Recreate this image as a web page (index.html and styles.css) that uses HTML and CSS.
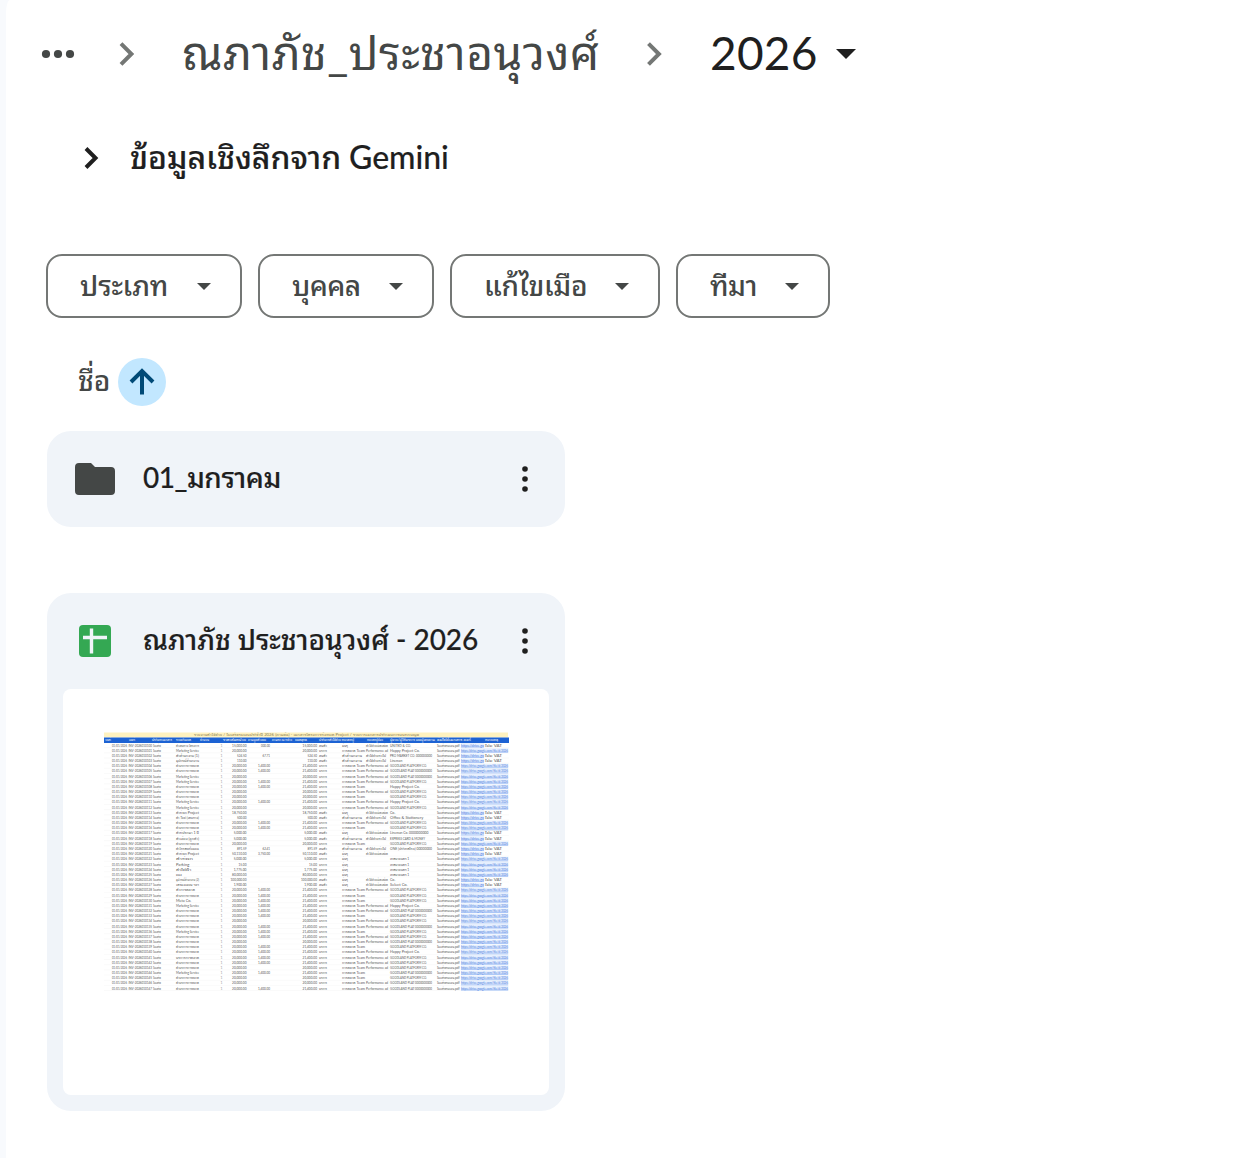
FILE: index.html
```html
<!DOCTYPE html>
<html lang="th">
<head>
    <meta charset="UTF-8">
    <meta name="viewport" content="width=device-width, initial-scale=1.0">
    <title>2026</title>
    <link rel="stylesheet" href="styles.css">
</head>
<body>
    <main class="panel">
        <nav class="breadcrumb">
            <svg class="more" width="34" height="10" viewBox="0 0 34 10"><circle cx="5" cy="5" r="4.1"/><circle cx="17" cy="5" r="4.1"/><circle cx="29" cy="5" r="4.1"/></svg>
            <svg class="chevron" width="16" height="24" viewBox="0 0 16 24"><path d="M2 1.6 12.4 12 2 22.4"/></svg>
            <span class="crumb">ณภาภัช_ประชาอนุวงศ์</span>
            <svg class="chevron" width="16" height="24" viewBox="0 0 16 24"><path d="M2.5 1.6 12.9 12 2.5 22.4"/></svg>
            <span class="crumb current">2026</span>
            <svg class="caret-big" width="20" height="10" viewBox="0 0 20 10"><path d="M0 0h20L10 10z"/></svg>
        </nav>

        <div class="insight">
            <svg class="chevron dark" width="16" height="24" viewBox="0 0 16 24"><path d="M3 2.5 12.5 12 3 21.5"/></svg>
            <span class="insight-title">ข้อมูลเชิงลึกจาก Gemini</span>
        </div>

        <div class="filters">
            <button class="chip chip-type"><span>ประเภท</span><svg width="14" height="7" viewBox="0 0 14 7"><path d="M0 0h14L7 7z"/></svg></button>
            <button class="chip chip-people"><span>บุคคล</span><svg width="14" height="7" viewBox="0 0 14 7"><path d="M0 0h14L7 7z"/></svg></button>
            <button class="chip chip-modified"><span>แก้ไขเมื่อ</span><svg width="14" height="7" viewBox="0 0 14 7"><path d="M0 0h14L7 7z"/></svg></button>
            <button class="chip chip-source"><span>ที่มา</span><svg width="14" height="7" viewBox="0 0 14 7"><path d="M0 0h14L7 7z"/></svg></button>
        </div>

        <div class="sort">
            <span class="sort-label">ชื่อ</span>
            <span class="sort-arrow"><svg width="26" height="28" viewBox="0 0 26 28"><path d="M13 26.5V3M2 14 13 3l11 11"/></svg></span>
        </div>

        <div class="card folder">
            <div class="card-head">
                <span class="icon"><svg width="40" height="32" viewBox="0 0 40 32"><path fill="#444746" d="M4 0h12l4 4h16a4 4 0 0 1 4 4v20a4 4 0 0 1-4 4H4a4 4 0 0 1-4-4V4a4 4 0 0 1 4-4z"/></svg></span>
                <span class="name">01_มกราคม</span>
                <svg class="dots" width="8" height="28" viewBox="0 0 8 28"><circle cx="4" cy="4" r="2.8"/><circle cx="4" cy="14" r="2.8"/><circle cx="4" cy="24" r="2.8"/></svg>
            </div>
        </div>

        <div class="card file">
            <div class="card-head">
                <span class="icon"><svg width="32" height="32" viewBox="0 0 32 32"><rect width="32" height="32" rx="4" fill="#34a853"/><path d="M4 12.5h24M12.5 3.5v25" stroke="#f0f4f9" stroke-width="3.4"/></svg></span>
                <span class="name">ณภาภัช ประชาอนุวงศ์ - 2026</span>
                <svg class="dots" width="8" height="28" viewBox="0 0 8 28"><circle cx="4" cy="4" r="2.8"/><circle cx="4" cy="14" r="2.8"/><circle cx="4" cy="24" r="2.8"/></svg>
            </div>
            <svg class="preview" id="preview" width="486" height="406" viewBox="0 0 486 406"></svg>
        </div>
    </main>
    <script src="preview.js"></script>
</body>
</html>
```
FILE: styles.css
```css
body {
    margin: 0;
    background-color: #f8fafd;
    font-family: Lato, "Noto Sans Thai Looped", "Noto Sans Thai", "Noto Sans", sans-serif;
    color: #1f1f1f;
}
.panel {
    box-sizing: border-box;
    height: 1158px;
    margin-left: 6px;
    padding-left: 40px;
    background-color: #fff;
    border-top-left-radius: 4px 14px;
    overflow: hidden;
}
.breadcrumb {
    display: flex;
    align-items: center;
    height: 108px;
    margin-left: -5px;
    white-space: nowrap;
}
.more {
    fill: #444746;
    margin-right: 44px;
}
.chevron {
    fill: none;
    stroke: #747775;
    stroke-width: 4;
}
.chevron.dark {
    stroke: #1f1f1f;
}
.crumb {
    width: 416px;
    margin: 0 48px 0 47px;
    padding-bottom: 2px;
    font-size: 46px;
    line-height: 72px;
    letter-spacing: 0.5px;
    color: #444746;
}
.crumb.current {
    width: 108px;
    margin: 0 18px 0 48px;
    letter-spacing: 0.2px;
    color: #1f1f1f;
}
.caret-big {
    fill: #1f1f1f;
}
.insight {
    display: flex;
    align-items: center;
    height: 100px;
    padding-left: 37px;
    gap: 31px;
}
.insight-title {
    padding-bottom: 7px;
    font-size: 32px;
    font-weight: 500;
    letter-spacing: -0.07px;
    -webkit-text-stroke: 0.15px #1f1f1f;
    white-space: nowrap;
}
.filters {
    display: flex;
    gap: 16px;
    margin-top: 46px;
}
.chip {
    box-sizing: border-box;
    display: flex;
    align-items: center;
    justify-content: space-between;
    height: 64px;
    padding: 0 29px 0 32px;
    border: 2px solid #747775;
    border-radius: 16px;
    background: none;
    color: #444746;
    font-family: inherit;
    font-size: 28px;
    font-weight: 500;
    white-space: nowrap;
}
.chip span {
    height: 36px;
    line-height: 34px;
}
.chip svg {
    fill: #444746;
}
.chip-type {
    width: 196px;
    letter-spacing: -0.1px;
}
.chip-people {
    width: 176px;
    letter-spacing: -0.6px;
}
.chip-modified {
    width: 210px;
    letter-spacing: -0.3px;
}
/* the top tone mark is cut off by the chip label */
.chip-modified span {
    clip-path: polygon(0 -2px, 60% -2px, 60% 5px, 100% 5px, 100% 100%, 0 100%);
}
.chip-source {
    width: 154px;
    letter-spacing: -0.5px;
}
.chip-source span {
    clip-path: inset(5px 0 0 0);
}
.sort {
    display: flex;
    align-items: center;
    height: 48px;
    margin: 40px 0 25px 32px;
}
.sort-label {
    width: 40px;
    padding-bottom: 7px;
    font-size: 28px;
    font-weight: 500;
    color: #444746;
}
.sort-arrow {
    display: flex;
    align-items: center;
    justify-content: center;
    width: 48px;
    height: 48px;
    border-radius: 50%;
    background-color: #c2e7ff;
}
.sort-arrow svg {
    fill: none;
    stroke: #004a77;
    stroke-width: 4;
}
.card {
    box-sizing: border-box;
    width: 518px;
    margin-left: 1px;
    padding: 0 16px;
    border-radius: 24px;
    background-color: #f0f4f9;
}
.card-head {
    display: flex;
    align-items: center;
    height: 96px;
}
.icon {
    display: flex;
    justify-content: center;
    width: 64px;
    margin-right: 16px;
}
.name {
    flex: 1;
    padding-bottom: 7px;
    font-size: 28px;
    font-weight: 500;
    letter-spacing: -0.06px;
    -webkit-text-stroke: 0.15px #1f1f1f;
    white-space: nowrap;
}
.folder .name {
    letter-spacing: -0.5px;
}
.dots {
    fill: #1f1f1f;
    margin-right: 20px;
}
.file {
    height: 518px;
    margin-top: 66px;
}
.preview {
    display: block;
    border-radius: 8px;
    background-color: #fff;
    font-size: 3.3px;
}
```
FILE: preview.js
```js
const preview = document.getElementById('preview');
const NS = 'http://www.w3.org/2000/svg';

function add(tag, attrs, text) {
    const el = document.createElementNS(NS, tag);
    for (const key in attrs) el.setAttribute(key, attrs[key]);
    if (text) el.textContent = text;
    preview.appendChild(el);
}

function cell(x, y, width, text, color) {
    add('text', { x: x, y: y, textLength: width, lengthAdjust: 'spacingAndGlyphs', fill: color || '#555' }, text);
}

const service = 'ค่าบริการการตลาด';
const marketing = 'Marketing Service';
const goods = 'GOODLAND PLATFORM CO.';
// item, amount, vat, kind (o = other, f = office, t = team), supplier
const rows = [
    ['ค่าเดินทาง โครงการ', '15,000.00', '000.00', 'o', 'UNITED & CO.'],
    [marketing, '20,000.00', '', 't', 'Happy Project Co.'],
    ['ค่าสำนักงาน (1)', '524.50', '67.71', 'f', 'PRO MARKET CO. 000000000'],
    ['อุปกรณ์สำนักงาน', '110.00', '', 'f', 'Lineman'],
    [service, '20,000.00', '1,400.00', 't', goods],
    [service, '20,000.00', '1,400.00', 't', 'GOODLAND PLAT 0000000000'],
    [marketing, '20,000.00', '', 't', 'GOODLAND PLAT 0000000000'],
    [marketing, '20,000.00', '1,400.00', 't', goods],
    [service, '20,000.00', '1,400.00', 'u', 'Happy Project Co.'],
    [service, '20,000.00', '', 't', goods],
    [service, '20,000.00', '', 'u', goods],
    [marketing, '20,000.00', '1,400.00', 't', 'Happy Project Co.'],
    [marketing, '20,000.00', '', 't', goods],
    ['ค่าที่พัก Project', '18,750.00', '', 'o', 'Co.'],
    ['ค่า Taxi (เดินทาง)', '500.00', '', 'f', 'Office & Stationery'],
    [service, '20,000.00', '1,400.00', 't', goods],
    [service, '20,000.00', '1,400.00', 'u', goods],
    ['ค่าที่ปรึกษา 1 ปี', '5,000.00', '', 'o', 'Lineman Co. 0000000000'],
    ['ค่าเลี้ยง (ลูกค้า)', '5,000.00', '', 'f', 'EXPRESS CARD & MONEY'],
    [service, '20,000.00', '', 'u', goods],
    ['ค่าโทรศัพท์มือถือ', '891.59', '62.41', 'f', 'ONE (ประเทศไทย) 00000000'],
    ['ค่าที่พัก Project', '50,110.00', '3,750.00', 'o', ''],
    ['ค่าที่พัก', '5,000.00', '', 'o', 'เทศบาลนคร 1'],
    ['Parking', '15.00', '', 'o', 'เทศบาลนคร 1'],
    ['ค่าไฟฟ้า', '1,775.00', '', 'o', 'เทศบาลนคร 1'],
    ['ของ', '80,000.00', '', 'o', 'เทศบาลนคร 1'],
    ['อุปกรณ์สำนักงาน (2)', '100,000.00', '', 'o', 'Co.'],
    ['เครื่องเขียน ฯลฯ', '1,900.00', '', 'o', 'Select Co.'],
    ['ค่าการตลาด', '20,000.00', '1,400.00', 't', goods],
    [service, '20,000.00', '1,400.00', 'u', goods],
    ['Meta Co.', '20,000.00', '1,400.00', 'u', goods],
    [marketing, '20,000.00', '1,400.00', 't', 'Happy Project Co.'],
    [service, '20,000.00', '1,400.00', 't', 'GOODLAND PLAT 0000000000'],
    [service, '20,000.00', '1,400.00', 'u', goods],
    [service, '20,000.00', '', 't', goods],
    [service, '20,000.00', '1,400.00', 't', 'GOODLAND PLAT 0000000000'],
    [marketing, '20,000.00', '1,400.00', 'u', goods],
    [service, '20,000.00', '1,400.00', 't', goods],
    [service, '20,000.00', '', 't', 'GOODLAND PLAT 0000000000'],
    [service, '20,000.00', '1,400.00', 'u', goods],
    [service, '20,000.00', '1,400.00', 't', 'Happy Project Co.'],
    ['บริการการตลาด', '20,000.00', '1,400.00', 't', goods],
    [service, '20,000.00', '1,400.00', 't', goods],
    [service, '20,000.00', '', 't', goods],
    [marketing, '20,000.00', '1,400.00', 'u', 'GOODLAND PLAT 0000000000'],
    [service, '20,000.00', '', 'u', goods],
    [service, '20,000.00', '', 't', 'GOODLAND PLAT 0000000000'],
    [service, '20,000.00', '1,400.00', 't', 'GOODLAND PLAT 0000000000']
];
const shortLinks = [0, 2, 3, 13, 14, 17, 18, 20, 21, 26, 27];

// sheet title and header row
add('rect', { x: 41, y: 43.5, width: 404, height: 5, fill: '#fff2bf' });
cell(131, 47.2, 225, 'รายงานค่าใช้จ่าย / ใบเสร็จรับเงินประจำปี 2026 (ภาษีซื้อ) - เอกสารโครงการทั้งหมด Project / รายการเอกสารประกอบการบันทึกบัญชี', '#8b8055');
add('rect', { x: 41, y: 48.5, width: 405, height: 5.5, fill: '#1c62d3' });
const heads = [[42, 6, 'วันที่'], [66, 6, 'เลขที่'], [89, 20, 'ประเภทเอกสาร'], [113, 15, 'รายละเอียด'], [137, 9, 'จำนวน'],
    [160, 23, 'ราคาต่อหน่วย'], [185, 18, 'ภาษีมูลค่าเพิ่ม'], [209, 20, 'ภาษีหัก ณ ที่จ่าย'], [232, 12, 'ยอดสุทธิ'],
    [256, 35, 'ประเภทค่าใช้จ่าย หมวดหมู่'], [304, 16, 'หมวดหมู่ย่อย'], [327, 45, 'ผู้ขาย/ผู้ให้บริการ เลขผู้เสียภาษี'], [374, 34, 'ชื่อไฟล์เอกสาร ลิงก์'], [422, 13, 'หมายเหตุ']];
for (const h of heads) cell(h[0], 52.4, h[1], h[2], '#fff');

rows.forEach((row, i) => {
    const y = 57.6 + i * 5.17;
    const short = shortLinks.includes(i);
    const amount = row[1].length * 1.6;
    add('path', { d: 'M41 ' + (y + 1) + 'H446', stroke: '#f5f5f5', 'stroke-width': 0.5 });
    cell(49, y, 15, '01/01/2026');
    cell(65.5, y, 23.5, 'INV-2026010' + (100 + i));
    cell(90, y, 8, 'ใบเสร็จ');
    cell(113, y, Math.min(23, row[0].length * 1.9), row[0]);
    cell(157.5, y, 2, '1', '#999');
    cell(183.5 - amount, y, amount, row[1]);
    if (row[2]) cell(207 - row[2].length * 1.5, y, row[2].length * 1.5, row[2]);
    cell(254 - amount, y, amount, row[2] === '1,400.00' ? '21,400.00' : row[1]);
    cell(256, y, 8, short ? 'สินค้า' : 'บริการ');
    if (row[3] === 'o') {
        cell(279, y, 6, 'อื่นๆ');
        if (short) cell(303, y, 22, 'ค่าใช้จ่ายเบ็ดเตล็ด');
    } else if (row[3] === 'f') {
        cell(279, y, 20, 'ค่าสำนักงาน');
        cell(303, y, 20, 'ค่าใช้จ่ายทั่วไป');
    } else {
        cell(279, y, 23, 'การตลาด Team');
        if (row[3] === 't') cell(303, y, 22, 'Performance ad');
    }
    if (row[4]) cell(327, y, Math.min(45, row[4].length * 1.75), row[4]);
    cell(374, y, 22.5, 'ใบเสร็จรับเงิน.pdf');
    add('rect', { x: 398, y: y - 3.5, width: short ? 23 : 47.5, height: 4.4, fill: '#e5effe' });
    cell(398, y, short ? 23 : 47, short ? 'https://drive.go' : 'https://drive.google.com/file/d/2026', '#4779dc');
    add('path', { d: 'M398 ' + (y + 0.5) + 'h' + (short ? 23 : 47), stroke: '#82a9f2', 'stroke-width': 0.6 });
    if (short) cell(422, y, 17, 'ไม่มี VAT');
});
```
